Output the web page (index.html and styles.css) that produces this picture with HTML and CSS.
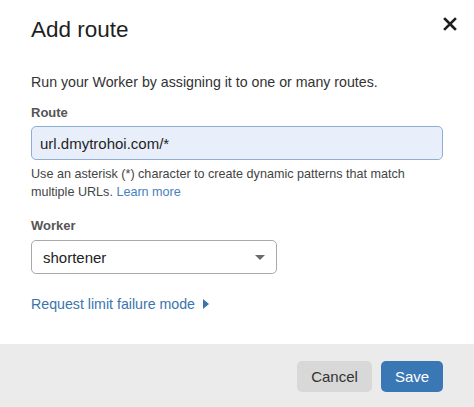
FILE: index.html
```html
<!DOCTYPE html>
<html lang="en">
<head>
  <meta charset="UTF-8">
  <title>Add route</title>
  <link rel="stylesheet" href="styles.css">
</head>
<body>
  <div class="modal">
    <div class="modal-header">
      <h2>Add route</h2>
      <button class="close-btn" aria-label="Close">
        <svg width="14" height="14" viewBox="0 0 14 14">
          <path d="M2 2 L12 12 M12 2 L2 12" stroke="#1f1f1f" stroke-width="2.6" stroke-linecap="square"/>
        </svg>
      </button>
    </div>

    <div class="modal-body">
      <p class="intro">Run your Worker by assigning it to one or many routes.</p>

      <label class="field-label" for="route">Route</label>
      <input type="text" id="route" class="route-input" value="url.dmytrohoi.com/*">
      <p class="help">Use an asterisk (*) character to create dynamic patterns that match<br>multiple URLs. <a href="#">Learn more</a></p>

      <label class="field-label worker-label" for="worker">Worker</label>
      <div class="select-box" id="worker">
        <span>shortener</span>
        <span class="caret"></span>
      </div>

      <a href="#" class="toggle-link">Request limit failure mode <span class="toggle-arrow"></span></a>
    </div>

    <div class="modal-footer">
      <button class="btn btn-cancel">Cancel</button>
      <button class="btn btn-save">Save</button>
    </div>
  </div>
</body>
</html>
```

FILE: styles.css
```css
body {
  margin: 0;
  padding: 0;
  background: #fff;
  font-family: 'Liberation Sans', Arial, sans-serif;
  color: #333;
}

.modal {
  width: 474px;
  height: 407px;
  display: flex;
  flex-direction: column;
}

.modal-header {
  display: flex;
  justify-content: space-between;
  align-items: flex-start;
  padding: 17px 17px 0 31px;
}

.modal-header h2 {
  margin: 0;
  font-size: 22.5px;
  line-height: 26px;
  font-weight: normal;
  color: #1f1f1f;
}

.close-btn {
  border: none;
  background: none;
  padding: 0;
  width: 14px;
  height: 14px;
  cursor: pointer;
}

.close-btn svg {
  display: block;
}

.modal-body {
  padding: 0 31px;
  flex: 1;
}

.intro {
  margin: 29px 0 0;
  font-size: 14.2px;
  line-height: 20px;
  color: #333;
}

.field-label {
  display: block;
  margin-top: 12px;
  font-size: 13px;
  line-height: 18px;
  font-weight: bold;
  color: #555;
}

.worker-label {
  margin-top: 16px;
}

.route-input {
  display: block;
  box-sizing: border-box;
  width: 412px;
  height: 34px;
  margin-top: 4px;
  padding: 0 8px;
  border: 1px solid #8eaed6;
  border-radius: 5px;
  background: #e8effb;
  font-family: inherit;
  font-size: 15px;
  color: #1f1f1f;
  outline: none;
}

.help {
  margin: 5px 0 0;
  font-size: 12.6px;
  line-height: 18px;
  color: #444;
}

.help a {
  color: #4682bd;
  text-decoration: none;
}

.select-box {
  box-sizing: border-box;
  width: 246px;
  height: 34px;
  margin-top: 5px;
  padding: 0 11px;
  border: 1px solid #a9a9a9;
  border-radius: 5px;
  display: flex;
  align-items: center;
  justify-content: space-between;
  font-size: 15px;
  color: #222;
}

.caret {
  width: 0;
  height: 0;
  border-left: 5px solid transparent;
  border-right: 5px solid transparent;
  border-top: 5px solid #6b6b6b;
}

.toggle-link {
  display: inline-flex;
  align-items: center;
  gap: 8px;
  margin-top: 20px;
  font-size: 14.2px;
  line-height: 20px;
  color: #3b74ad;
  text-decoration: none;
}

.toggle-arrow {
  width: 0;
  height: 0;
  border-top: 5px solid transparent;
  border-bottom: 5px solid transparent;
  border-left: 6px solid #3b74ad;
}

.modal-footer {
  background: #ebebeb;
  height: 63px;
  box-sizing: border-box;
  padding: 17px 31px 0;
  display: flex;
  justify-content: flex-end;
  align-items: flex-start;
  gap: 9px;
}

.btn {
  height: 31px;
  border: none;
  border-radius: 5px;
  font-family: inherit;
  font-size: 15px;
  cursor: pointer;
}

.btn-cancel {
  width: 75px;
  background: #d8d8d8;
  color: #333;
}

.btn-save {
  width: 62px;
  background: #3a78b5;
  color: #fff;
}
```
